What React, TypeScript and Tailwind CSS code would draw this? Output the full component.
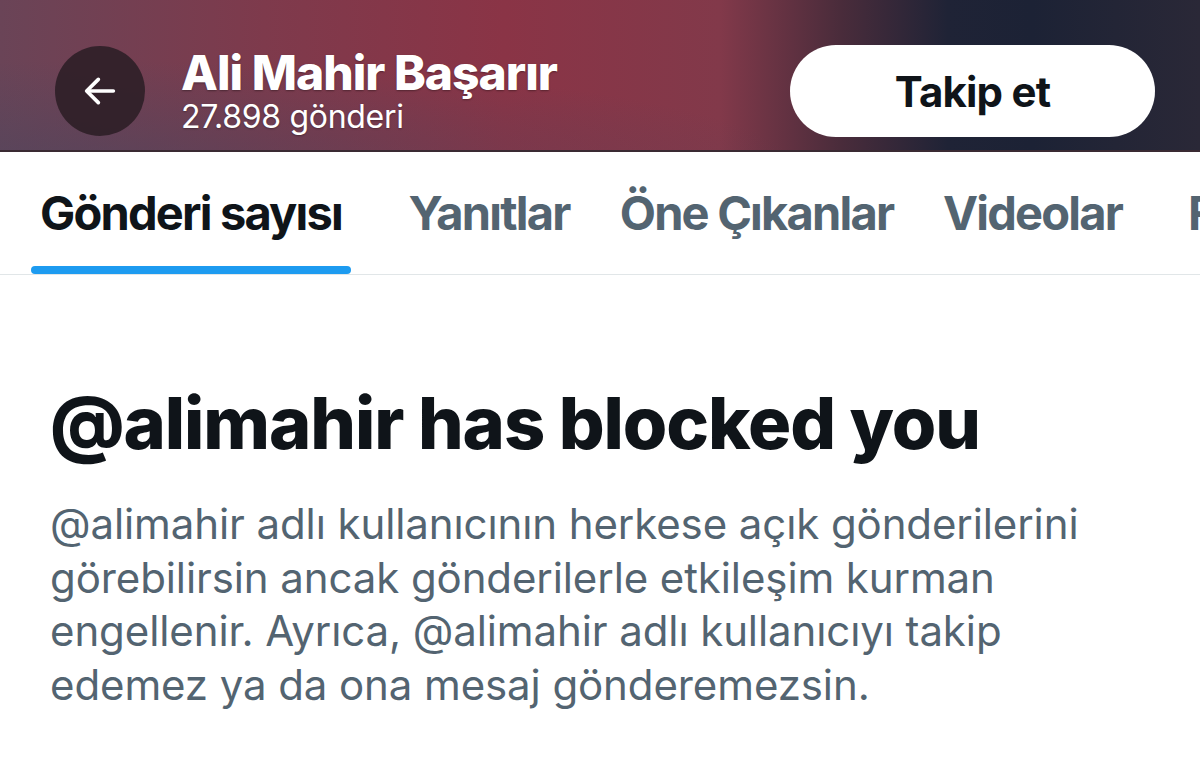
import React from 'react';

const tabs = [
  { label: 'Gönderi sayısı', box: 'w-[320px] ml-[31px]', active: true },
  { label: 'Yanıtlar', box: 'w-[218px] ml-[29px]' },
  { label: 'Öne Çıkanlar', box: 'w-[317px]' },
  { label: 'Videolar', box: 'w-[235px]' },
];

const App: React.FC = () => {
  return (
    <div className="w-[1200px] h-[777px] overflow-hidden bg-white font-['Inter',sans-serif]">
      {/* Banner header */}
      <div className="relative h-[152px] pt-[30px] flex items-center bg-[linear-gradient(90deg,#6a4457_0%,#7e3a4c_22%,#8a3446_42%,#82394a_60%,#4a2c3b_70%,#1f2336_79%,#1c2235_86%,#2a2837_100%)]">
        <div className="absolute inset-0 bg-[radial-gradient(ellipse_at_8%_110%,rgba(70,70,95,0.55),transparent_45%)]" />
        <div className="absolute inset-x-0 bottom-0 h-[2px] bg-[#3a2a33]" />
        <button className="relative shrink-0 ml-[55px] w-[90px] h-[90px] rounded-full bg-[#2e1f27]/90 flex items-center justify-center">
          <svg width="40" height="40" viewBox="0 0 24 24" fill="none" stroke="white" strokeWidth="2.2" strokeLinecap="round" strokeLinejoin="round">
            <path d="M20 12H4.5" />
            <path d="M11 5l-7 7 7 7" />
          </svg>
        </button>
        <div className="relative ml-[36px] mt-[2px] flex flex-col gap-[6px] text-white">
          <span className="text-[48px] leading-[44px] font-extrabold tracking-[-1px] [text-shadow:0_1px_2px_rgba(0,0,0,0.35)]">Ali Mahir Başarır</span>
          <span className="text-[32px] leading-[32px] font-normal tracking-[-0.3px] [text-shadow:0_1px_2px_rgba(0,0,0,0.3)]">27.898 gönderi</span>
        </div>
        <button className="relative shrink-0 ml-auto mr-[45px] w-[365px] h-[92px] rounded-full bg-white text-[#0f1419] text-[42px] font-bold tracking-[-0.8px]">
          Takip et
        </button>
      </div>

      {/* Tabs */}
      <div className="h-[123px] flex items-stretch border-b border-[#e1e6e8] overflow-hidden">
        {tabs.map((t, i) => (
          <div key={i} className={`relative shrink-0 flex items-center justify-center ${t.box}`}>
            <span className={`text-[47px] font-bold tracking-[-1.8px] ${t.active ? 'text-[#0f1419]' : 'text-[#536471]'}`}>
              {t.label}
            </span>
            {t.active && <div className="absolute left-0 right-0 bottom-0 h-[8px] rounded-full bg-[#1d9bf0]" />}
          </div>
        ))}
        <div className="shrink-0 flex items-center pl-[38px]">
          <span className="text-[47px] font-bold tracking-[-1.8px] text-[#536471]">Fotoğraflar</span>
        </div>
      </div>

      {/* Blocked notice */}
      <div className="pl-[50px] pr-[40px] pt-[112px]">
        <h1 className="text-[72px] font-extrabold text-[#0f1419] leading-none tracking-[-1.1px]">@alimahir has blocked you</h1>
        <p className="mt-[38px] text-[42px] leading-[53.5px] text-[#536471] font-normal tracking-[-0.1px] whitespace-nowrap">
          @alimahir adlı kullanıcının herkese açık gönderilerini<br />
          görebilirsin ancak gönderilerle etkileşim kurman<br />
          engellenir. Ayrıca, @alimahir adlı kullanıcıyı takip<br />
          edemez ya da ona mesaj gönderemezsin.
        </p>
      </div>
    </div>
  );
};

export default App;
